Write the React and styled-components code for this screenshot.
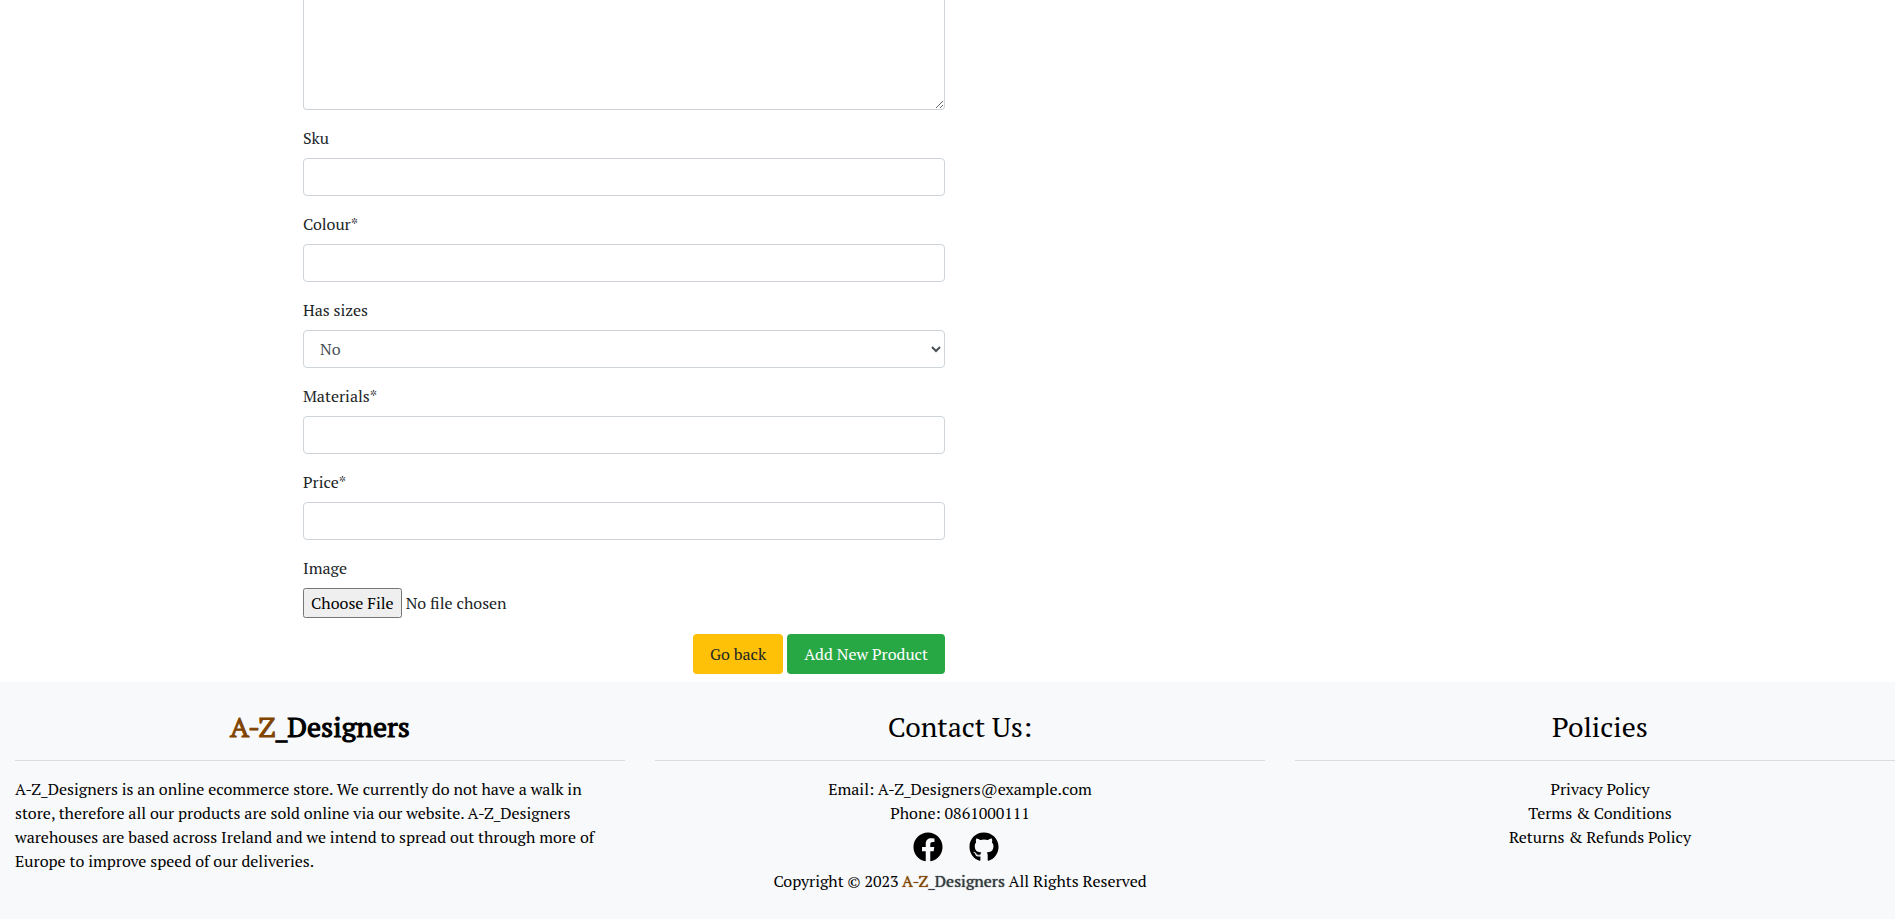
import React from "react";
import styled, { createGlobalStyle } from "styled-components";
import { FaFacebook, FaGithub } from "react-icons/fa";

const GlobalStyle = createGlobalStyle`
  *, *::before, *::after { box-sizing: border-box; }
  html, body { margin: 0; }
  body {
    background: #fff;
    color: #212529;
    font-family: "PT Serif", "Liberation Serif", serif;
    font-size: 16px;
    line-height: 24px;
    overflow-x: hidden;
  }
  input, select, textarea, button { font: inherit; }
`;

const Page = styled.div`
  display: flex;
  flex-direction: column;
  min-height: 100vh;
  margin-right: -25px;
`;

const Main = styled.main`
  margin: 0 15%;
  padding-bottom: 8px;
`;

const Form = styled.form`
  display: flex;
  flex-direction: column;
  gap: 16px;
  width: 50%;
  padding: 0 15px;
`;

const Field = styled.div`
  display: flex;
  flex-direction: column;
  gap: 8px;
`;

const Label = styled.label`
  align-self: flex-start;
`;

const Control = styled.input`
  width: 100%;
  height: 38px;
  padding: 6px 12px;
  border: 1px solid #ced4da;
  border-radius: 4px;
  background: #fff;
  color: #495057;
`;

const Description = styled(Control)`
  display: block;
  height: 110px;
  border-top: 0;
  border-radius: 0 0 4px 4px;
  resize: vertical;
`;

const FileInput = styled.input`
  width: 100%;
  height: 30px;
  &::file-selector-button {
    font: inherit;
    height: 30px;
  }
`;

const Actions = styled.div`
  display: flex;
  justify-content: flex-end;
  gap: 4px;
`;

const Button = styled.button`
  height: 40px;
  padding: 0 17px;
  border: 0;
  border-radius: 4px;
  background: ${(p) => (p.$primary ? "#28a745" : "#ffc107")};
  color: ${(p) => (p.$primary ? "#fff" : "#212529")};
`;

const Footer = styled.footer`
  display: grid;
  grid-template-columns: repeat(3, 1fr);
  flex-grow: 1;
  padding: 28px 0 24px;
  background: #f8f9fa;
  color: #000;
`;

const Column = styled.section`
  padding: 0 15px;
  text-align: ${(p) => (p.$left ? "left" : "center")};
`;

const Heading = styled.h3`
  margin: 0;
  padding-bottom: 16px;
  border-bottom: 1px solid #dbdcdd;
  font-size: 28px;
  font-weight: 400;
  line-height: 34px;
  text-align: center;
`;

const Text = styled.p`
  margin: ${(p) => (p.$spaced ? "16px 0 0" : "0")};
`;

const Brand = styled.strong`
  color: ${(p) => (p.$large ? "#000" : "#343a40")};
  font-weight: 400;
  -webkit-text-stroke: ${(p) => (p.$large ? "1px currentColor" : "0")};
  text-shadow: ${(p) => (p.$large ? "none" : "0 0 1px currentColor")};
`;

const Accent = styled.span`
  color: #804400;
  -webkit-text-stroke-color: currentColor;
  text-shadow: inherit;
`;

const Links = styled.ul`
  margin: 16px 0 0;
  padding: 0;
  list-style: none;
`;

const Link = styled.a`
  color: inherit;
  text-decoration: none;
`;

const Socials = styled.div`
  display: flex;
  justify-content: center;
  align-items: center;
  gap: 26px;
  height: 44px;
  padding-right: 8px;
`;

const SocialLink = styled(Link)`
  display: flex;
  font-size: 30px;
`;

const policies = ["Privacy Policy", "Terms & Conditions", "Returns & Refunds Policy"];

function TextField({ id, label }) {
  return (
    <Field>
      <Label htmlFor={id}>{label}</Label>
      <Control id={id} name={id} type="text" />
    </Field>
  );
}

export default function App() {
  return (
    <>
      <GlobalStyle />
      <Page>
        <Main>
          <Form onSubmit={(e) => e.preventDefault()}>
            <Description as="textarea" name="description" aria-label="Description" />
            <TextField id="sku" label="Sku" />
            <TextField id="colour" label="Colour*" />
            <Field>
              <Label htmlFor="sizes">Has sizes</Label>
              <Control as="select" id="sizes" name="sizes" defaultValue="no">
                <option value="yes">Yes</option>
                <option value="no">No</option>
              </Control>
            </Field>
            <TextField id="materials" label="Materials*" />
            <TextField id="price" label="Price*" />
            <Field>
              <Label htmlFor="image">Image</Label>
              <FileInput id="image" name="image" type="file" />
            </Field>
            <Actions>
              <Button type="button">Go back</Button>
              <Button type="submit" $primary>Add New Product</Button>
            </Actions>
          </Form>
        </Main>
        <Footer>
          <Column $left>
            <Heading>
              <Brand $large><Accent>A-Z</Accent>_Designers</Brand>
            </Heading>
            <Text $spaced>
              A-Z_Designers is an online ecommerce store. We currently do not have a walk in
              store, therefore all our products are sold online via our website. A-Z_Designers
              warehouses are based across Ireland and we intend to spread out through more of
              Europe to improve speed of our deliveries.
            </Text>
          </Column>
          <Column>
            <Heading>Contact Us:</Heading>
            <Text $spaced>Email: A-Z_Designers@example.com</Text>
            <Text>Phone: 0861000111</Text>
            <Socials>
              <SocialLink href="#facebook" aria-label="Facebook"><FaFacebook /></SocialLink>
              <SocialLink href="#github" aria-label="GitHub"><FaGithub /></SocialLink>
            </Socials>
            <Text>
              Copyright © 2023 <Brand><Accent>A-Z</Accent>_Designers</Brand> All Rights Reserved
            </Text>
          </Column>
          <Column>
            <Heading>Policies</Heading>
            <Links>
              {policies.map((name) => (
                <li key={name}><Link href="#policies">{name}</Link></li>
              ))}
            </Links>
          </Column>
        </Footer>
      </Page>
    </>
  );
}
